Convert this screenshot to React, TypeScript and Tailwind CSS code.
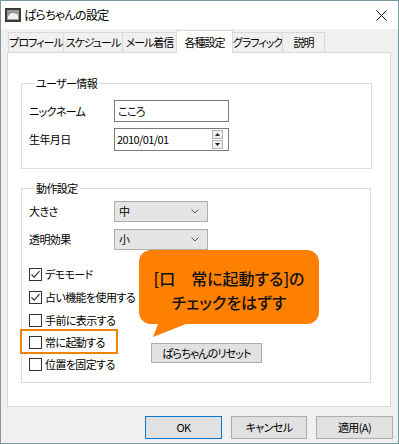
import React from 'react';

const tabs = [
  { label: 'プロフィール', w: 'w-[56px]' },
  { label: 'スケジュール', w: 'w-[60px]' },
  { label: 'メール着信', w: 'w-[55px]' },
  { label: '各種設定', w: 'w-[57px]', active: true },
  { label: 'グラフィック', w: 'w-[51px]' },
  { label: '説明', w: 'w-[43px]' },
];

function Checkbox({ label, checked, h }: { label: string; checked?: boolean; h: string }) {
  return (
    <div className={`flex items-center ${h}`}>
      <div className="w-[13px] h-[13px] border border-[#333] bg-white flex items-center justify-center">
        {checked && (
          <svg width="11" height="11" viewBox="0 0 11 11">
            <path d="M1.5 5.5 L4.2 8.2 L9.5 2.2" fill="none" stroke="#333" strokeWidth="1.2" />
          </svg>
        )}
      </div>
      <span className="ml-[3px] whitespace-nowrap">{label}</span>
    </div>
  );
}

function Combo({ value }: { value: string }) {
  return (
    <div className="w-[94px] h-[21px] bg-[#e5e5e5] border border-[#adadad] flex items-center justify-between pl-[4px] pr-[8px]">
      <span>{value}</span>
      <svg width="8" height="5" viewBox="0 0 8 5">
        <path d="M0.5 0.5 L4 4 L7.5 0.5" fill="none" stroke="#555" strokeWidth="1" />
      </svg>
    </div>
  );
}

export default function App() {
  return (
    <div className="relative w-[399px] h-[444px] bg-[#f0f0f0] border border-[#7a9ba3] flex flex-col text-[11px] tracking-[-0.6px] text-black font-['Noto_Sans_CJK_JP','Noto_Sans',sans-serif] [font-feature-settings:'palt'] leading-none">
      {/* Title bar */}
      <div className="h-[28px] bg-white flex items-center">
        <svg width="16" height="14" viewBox="0 0 16 14" className="ml-[4px]">
          <rect x="0" y="0" width="16" height="14" fill="#3a3a3a" />
          <rect x="2" y="2" width="12" height="10" fill="#9a9a9a" />
          <path d="M3 9 C5 4 9 4 13 7 L13 11 L3 11 Z" fill="#f2f2f2" />
        </svg>
        <span className="ml-[3px] text-[12px]">ぱらちゃんの設定</span>
        <svg width="11" height="11" viewBox="0 0 11 11" className="ml-auto mr-[11px]">
          <path d="M0.5 0.5 L10.5 10.5 M10.5 0.5 L0.5 10.5" stroke="#111" strokeWidth="1" />
        </svg>
      </div>

      {/* Tabs */}
      <div className="flex items-end pl-[7px] h-[23px]">
        {tabs.map((t, i) => (
          <div
            key={t.label}
            className={
              t.active
                ? `${t.w} h-[23px] bg-white border border-b-0 border-[#d9d9d9] -ml-px relative z-10 -mb-px flex items-center justify-center`
                : `${t.w} h-[20px] bg-[#f0f0f0] border border-b-0 border-[#d9d9d9] ${i > 0 ? '-ml-px' : ''} flex items-center justify-center`
            }
          >
            <span className="whitespace-nowrap tracking-[-1px]">{t.label}</span>
          </div>
        ))}
      </div>

      {/* Panel */}
      <div className="ml-[6px] w-[384px] h-[355px] bg-white border border-[#d9d9d9] px-[13px] pt-[22px]">
        <fieldset className="w-[351px] border border-[#dcdcdc] pl-[7px] pb-[17px]">
          <legend className="ml-[5px] px-[2px] leading-[16px]">ユーザー情報</legend>
          <div className="flex items-center mt-[9px]">
            <span className="w-[85px]">ニックネーム</span>
            <div className="w-[115px] h-[22px] border border-[#7a7a7a] flex items-center pl-[3px]">こころ</div>
          </div>
          <div className="flex items-center mt-[6px]">
            <span className="w-[85px]">生年月日</span>
            <div className="w-[115px] h-[23px] border border-[#7a7a7a] flex items-center pl-[2px] pr-[5px]">
              <span>2010/01/01</span>
              <div className="ml-auto flex flex-col gap-[1px]">
                <div className="w-[11px] h-[9px] bg-[#f0f0f0] border border-[#b5b5b5] flex items-center justify-center">
                  <svg width="5" height="3" viewBox="0 0 5 3"><path d="M0 3 L2.5 0 L5 3 Z" fill="#222" /></svg>
                </div>
                <div className="w-[11px] h-[9px] bg-[#f0f0f0] border border-[#b5b5b5] flex items-center justify-center">
                  <svg width="5" height="3" viewBox="0 0 5 3"><path d="M0 0 L2.5 3 L5 0 Z" fill="#222" /></svg>
                </div>
              </div>
            </div>
          </div>
        </fieldset>

        <fieldset className="mt-[11px] w-[350px] border border-[#dcdcdc] pl-[7px] pb-[7px]">
          <legend className="ml-[5px] px-[2px] leading-[16px]">動作設定</legend>
          <div className="flex items-center mt-[5px]">
            <span className="w-[85px]">大きさ</span>
            <Combo value="中" />
          </div>
          <div className="flex items-center mt-[7px]">
            <span className="w-[85px]">透明効果</span>
            <Combo value="小" />
          </div>
          <div className="flex mt-[13px]">
            <div className="w-[122px] flex flex-col">
              <Checkbox label="デモモード" checked h="h-[23px]" />
              <Checkbox label="占い機能を使用する" checked h="h-[23px]" />
              <Checkbox label="手前に表示する" h="h-[22px]" />
              <Checkbox label="常に起動する" h="h-[22px]" />
              <Checkbox label="位置を固定する" h="h-[22px]" />
            </div>
            <div className="flex flex-col justify-end pb-[12px]">
              <button className="w-[111px] h-[20px] bg-[#e1e1e1] border border-[#adadad] flex items-center justify-center whitespace-nowrap tracking-[-0.8px]">
                ぱらちゃんのリセット
              </button>
            </div>
          </div>
        </fieldset>
      </div>

      {/* Dialog buttons */}
      <div className="flex justify-end gap-[9px] mt-[9px] pr-[5px]">
        <button className="w-[77px] h-[23px] bg-[#e1e1e1] border border-[#0078d7] flex items-center justify-center">OK</button>
        <button className="w-[76px] h-[23px] bg-[#e1e1e1] border border-[#adadad] flex items-center justify-center">キャンセル</button>
        <button className="w-[77px] h-[23px] bg-[#e1e1e1] border border-[#adadad] flex items-center justify-center">適用(A)</button>
      </div>

      {/* Annotation: highlight box */}
      <div className="absolute left-[19px] top-[328px] w-[98px] h-[25px] border-2 border-[#f0820a]" />

      {/* Annotation: callout */}
      <svg className="absolute left-[138px] top-[310px]" width="90" height="30" viewBox="0 0 90 30">
        <path d="M14 26 L24 0 L80 0 Z" fill="#fd8000" />
      </svg>
      <div className="absolute left-[138px] top-[249px] w-[180px] h-[74px] rounded-[12px] bg-[#fd8000] flex flex-col items-center justify-center pt-[6px] text-[16px] tracking-normal font-medium leading-[24px] text-[#111]">
        <span className="block">[口　常に起動する]の</span>
        <span className="block">チェックをはずす</span>
      </div>
    </div>
  );
}
